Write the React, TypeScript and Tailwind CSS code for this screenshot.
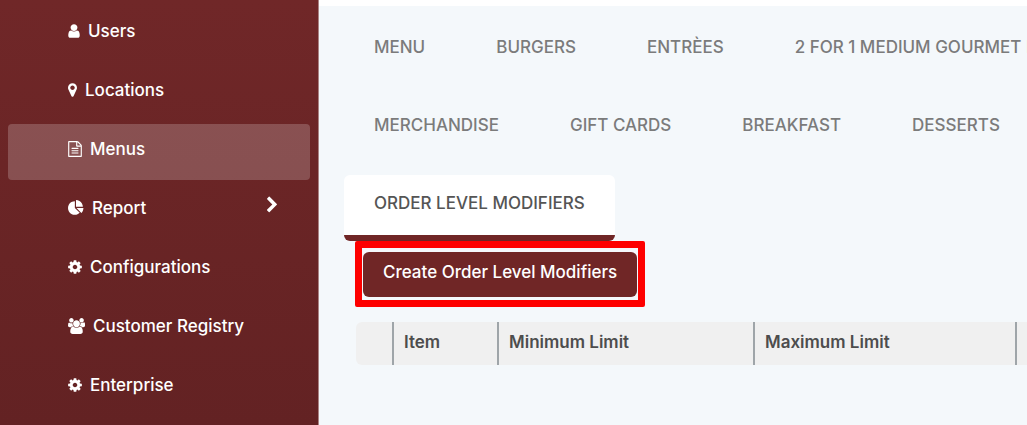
import clsx from "clsx";
import { useState } from "react";

type IconName = "user" | "marker" | "file" | "pie" | "cog" | "users" | "chevron";

interface IIcon {
  viewBox: string;
  path: string;
  className: string;
}

const icons: Record<IconName, IIcon> = {
  user: {
    viewBox: "256 0 1280 1792",
    className: "w-3 h-4",
    path: "M1536 1399q0 109-62.5 187t-150.5 78h-854q-88 0-150.5-78t-62.5-187q0-85 8.5-160.5t31.5-152 58.5-131 94-89 134.5-34.5q131 128 313 128t313-128q76 0 134.5 34.5t94 89 58.5 131 31.5 152 8.5 160.5zm-256-887q0 159-112.5 271.5t-271.5 112.5-271.5-112.5-112.5-271.5 112.5-271.5 271.5-112.5 271.5 112.5 112.5 271.5z",
  },
  marker: {
    viewBox: "384 0 1024 1792",
    className: "w-[9px] h-4",
    path: "M1152 640q0-106-75-181t-181-75-181 75-75 181 75 181 181 75 181-75 75-181zm256 0q0 109-33 179l-364 774q-16 33-47.5 52t-67.5 19-67.5-19-46.5-52l-365-774q-33-70-33-179 0-212 150-362t362-150 362 150 150 362z",
  },
  file: {
    viewBox: "128 0 1536 1792",
    className: "w-3.5 h-4",
    path: "M1596 380q28 28 48 76t20 88v1152q0 40-28 68t-68 28h-1344q-40 0-68-28t-28-68v-1600q0-40 28-68t68-28h896q40 0 88 20t76 48zm-444-244v376h376q-10-29-22-41l-313-313q-12-12-41-22zm384 1528v-1024h-416q-40 0-68-28t-28-68v-416h-768v1536h1280zm-1024-864q0-14 9-23t23-9h704q14 0 23 9t9 23v64q0 14-9 23t-23 9h-704q-14 0-23-9t-9-23v-64zm736 224q14 0 23 9t9 23v64q0 14-9 23t-23 9h-704q-14 0-23-9t-9-23v-64q0-14 9-23t23-9h704zm0 256q14 0 23 9t9 23v64q0 14-9 23t-23 9h-704q-14 0-23-9t-9-23v-64q0-14 9-23t23-9h704z",
  },
  pie: {
    viewBox: "0 0 1792 1792",
    className: "w-4 h-4",
    path: "M768 890l546 546q-106 108-247.5 168t-298.5 60q-209 0-385.5-103t-279.5-279.5-103-385.5 103-385.5 279.5-279.5 385.5-103v762zm187 6h773q0 157-60 298.5t-168 247.5zm709-128h-768v-768q209 0 385.5 103t279.5 279.5 103 385.5z",
  },
  cog: {
    viewBox: "128 0 1536 1792",
    className: "w-3.5 h-4",
    path: "M1152 896q0-106-75-181t-181-75-181 75-75 181 75 181 181 75 181-75 75-181zm512-109v222q0 12-8 23t-20 13l-185 28q-19 54-39 91 35 50 107 138 10 12 10 25t-9 23q-27 37-99 108t-94 71q-12 0-26-9l-138-108q-44 23-91 38-16 136-29 186-7 28-36 28h-222q-14 0-24.5-8.5t-11.5-21.5l-28-184q-49-16-90-37l-141 107q-10 9-25 9-14 0-25-11-126-114-165-168-7-10-7-23 0-12 8-23 15-21 51-66.5t54-70.5q-27-50-41-99l-183-27q-13-2-21-12.5t-8-23.5v-222q0-12 8-23t19-13l186-28q14-46 39-92-40-57-107-138-10-12-10-24 0-10 9-23 26-36 98.5-107.5t94.5-71.5q13 0 26 10l138 107q44-23 91-38 16-136 29-186 7-28 36-28h222q14 0 24.5 8.5t11.5 21.5l28 184q49 16 90 37l142-107q9-9 24-9 13 0 25 10 129 119 165 170 7 8 7 22 0 12-8 23-15 21-51 66.5t-54 70.5q26 50 41 98l183 28q13 2 21 12.5t8 23.5z",
  },
  users: {
    viewBox: "0 0 1920 1792",
    className: "w-[17px] h-4",
    path: "M593 896q-162 5-265 128h-134q-82 0-138-40.5t-56-118.5q0-353 124-353 6 0 43.5 21t97.5 42.5 119 21.5q67 0 133-23-5 37-5 66 0 159 93 290zM1664 1533q0 120-73 189.5t-194 69.5h-874q-121 0-194-69.5t-73-189.5q0-53 3.5-103.5t14-109 26.5-108.5 43-97.5 62-81 85.5-53.5 111.5-20q10 0 43 21.5t73 48 107 48 135 21.5 135-21.5 107-48 73-48 43-21.5q61 0 111.5 20t85.5 53.5 62 81 43 97.5 26.5 108.5 14 109 3.5 103.5zm-1024-1277q0 106-75 181t-181 75-181-75-75-181 75-181 181-75 181 75 75 181zm704 384q0 159-112.5 271.5t-271.5 112.5-271.5-112.5-112.5-271.5 112.5-271.5 271.5-112.5 271.5 112.5 112.5 271.5zm576 225q0 78-56 118.5t-138 40.5h-134q-103-123-265-128 93-131 93-290 0-29-5-66 66 23 133 23 59 0 119-21.5t97.5-42.5 43.5-21q124 0 124 353zm-128-609q0 106-75 181t-181 75-181-75-75-181 75-181 181-75 181 75 75 181z",
  },
  chevron: {
    viewBox: "346 0 1036 1792",
    className: "w-2.5 h-[18px]",
    path: "M1363 877l-742 742q-19 19-45 19t-45-19l-166-166q-19-19-19-45t19-45l531-531-531-531q-19-19-19-45t19-45l166-166q19-19 45-19t45 19l742 742q19 19 19 45t-19 45z",
  },
};

const Icon = ({ name }: { name: IconName }) => (
  <svg
    viewBox={icons[name].viewBox}
    className={clsx("shrink-0 fill-current", icons[name].className)}
    aria-hidden="true"
  >
    <path d={icons[name].path} />
  </svg>
);

interface INavItem {
  title: string;
  icon: IconName;
  hasChildren?: boolean;
}

const navItems: INavItem[] = [
  { title: "Users", icon: "user" },
  { title: "Locations", icon: "marker" },
  { title: "Menus", icon: "file" },
  { title: "Report", icon: "pie", hasChildren: true },
  { title: "Configurations", icon: "cog" },
  { title: "Customer Registry", icon: "users" },
  { title: "Enterprise", icon: "cog" },
];

const tabRows = [
  ["MENU", "BURGERS", "ENTRÈES", "2 FOR 1 MEDIUM GOURMET PIZZA"],
  ["MERCHANDISE", "GIFT CARDS", "BREAKFAST", "DESSERTS"],
  ["ORDER LEVEL MODIFIERS"],
];

const columns = [
  { title: "Item", className: "w-[105px]" },
  { title: "Minimum Limit", className: "w-[256px]" },
  { title: "Maximum Limit", className: "w-[262px]" },
];

const Sidebar = () => (
  <nav className="w-[319px] shrink-0 flex flex-col gap-[3px] pt-1.5 px-2 border-r border-[#a98384] bg-linear-to-b from-[#702728] to-[#632223] text-white">
    {navItems.map((item) => (
      <a
        key={item.title}
        href="#"
        className={clsx(
          "flex items-start h-14 rounded pl-[60px] pr-[33px] pt-[13px]",
          item.title === "Menus" && "bg-white/20"
        )}
      >
        <span className="flex items-center gap-2 leading-6">
          <Icon name={item.icon} />
          {item.title}
        </span>
        {item.hasChildren && (
          <span className="ml-auto">
            <Icon name="chevron" />
          </span>
        )}
      </a>
    ))}
  </nav>
);

const App = () => {
  const [activeTab, setActiveTab] = useState("ORDER LEVEL MODIFIERS");

  return (
    <div className="flex min-h-screen overflow-hidden bg-[#f4f8fb] font-['Inter',sans-serif] text-[17px] font-medium">
      <Sidebar />
      <main className="flex-1 min-w-0 overflow-hidden border-t-6 border-white">
        <div className="flex flex-col gap-3 pt-[13px] pl-[25px]">
          {tabRows.map((row) => (
            <div key={row[0]} className="flex gap-[11px]">
              {row.map((tab) => (
                <button
                  key={tab}
                  type="button"
                  onClick={() => setActiveTab(tab)}
                  className={clsx(
                    "h-[66px] px-[30px] pb-0.5 border-b-6 rounded-md whitespace-nowrap",
                    activeTab === tab
                      ? "bg-white border-[#702626] text-[#555]"
                      : "border-transparent text-[#7b7b7b]"
                  )}
                >
                  {tab}
                </button>
              ))}
            </div>
          ))}
        </div>

        <div className="pl-[37px]">
          <div className="relative w-fit ml-[7px] mt-[11px]">
            <button
              type="button"
              className="h-[45px] px-5 pb-1 rounded-md bg-[#702626] text-white whitespace-nowrap"
            >
              Create Order Level Modifiers
            </button>
            <div className="absolute -left-2 -right-2 -top-[11px] -bottom-2.5 border-7 border-[#fe0000] rounded-xs pointer-events-none" />
          </div>

          <table className="w-full mt-[25px] table-fixed text-left text-[#4d4d4d] border-separate border-spacing-0">
            <thead>
              <tr className="h-[43px] bg-[#f0f0f0]">
                <td className="w-[38px] rounded-l-md border-r-2 border-[#9fa5a9]" />
                {columns.map((column) => (
                  <th
                    key={column.title}
                    scope="col"
                    className={clsx(
                      "pl-2.5 pb-0.5 font-semibold border-r-2 border-[#9fa5a9]",
                      column.className
                    )}
                  >
                    {column.title}
                  </th>
                ))}
                <td />
              </tr>
            </thead>
          </table>
        </div>
      </main>
    </div>
  );
};

export default App;
